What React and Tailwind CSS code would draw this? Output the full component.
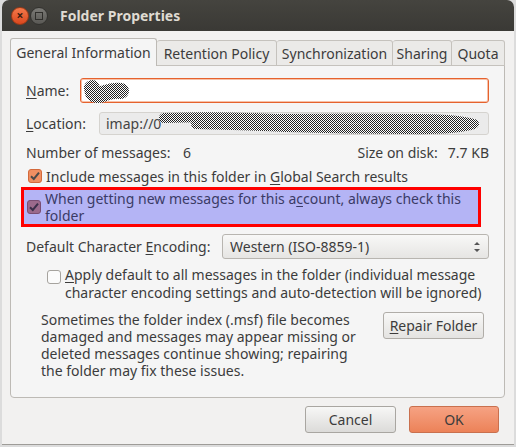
import React from 'react';

// dithered "scribble" used to hide private text
function Scribble({ width, height, d, strokeWidth }) {
  return (
    <svg width={width} height={height} className="absolute left-0 top-0">
      <defs>
        <pattern id={`dith-${width}`} width="2" height="2" patternUnits="userSpaceOnUse">
          <rect width="2" height="2" fill="#ffffff" />
          <rect width="1" height="1" fill="#222222" />
          <rect x="1" y="1" width="1" height="1" fill="#222222" />
        </pattern>
      </defs>
      <path d={d} fill="none" stroke={`url(#dith-${width})`} strokeWidth={strokeWidth} strokeLinecap="round" strokeLinejoin="round" />
    </svg>
  );
}

function Check({ checked, tone = 'orange' }) {
  if (!checked) {
    return (
      <svg width="14" height="14" className="shrink-0">
        <rect x="0.5" y="0.5" width="13" height="13" rx="2.5" fill="#fbfbfb" stroke="#a6a39e" />
      </svg>
    );
  }
  const fill = tone === 'orange' ? '#ef8f62' : '#9b6a8c';
  const stroke = tone === 'orange' ? '#d3693b' : '#7a4e73';
  const mark = tone === 'orange' ? '#4a4a4a' : '#3a2f4a';
  return (
    <svg width="14" height="14" className="shrink-0">
      <rect x="0.5" y="0.5" width="13" height="13" rx="2.5" fill={fill} stroke={stroke} />
      <path d="M3 7.2 L5.8 10 L11 3.6" fill="none" stroke={mark} strokeWidth="2" />
    </svg>
  );
}

const U = ({ children }) => <span className="underline underline-offset-2">{children}</span>;

export default function App() {
  const tabs = [
    ['Retention Policy', 'w-[120px]'],
    ['Synchronization', 'w-[116px]'],
    ['Sharing', 'w-[59px]'],
    ['Quota', 'w-[53px]'],
  ];

  return (
    <div className="w-[516px] h-[447px] bg-[#dcdcdc] overflow-hidden font-['Noto_Sans',sans-serif] text-[14px] text-[#3c3c3c]">
      <div className="ml-[2px] w-[512px] h-[445px] flex flex-col bg-[#f2f1f0] rounded-t-[7px] overflow-hidden border-b border-[#9e9c98]">
        {/* title bar */}
        <div className="h-[31px] shrink-0 flex items-center bg-gradient-to-b from-[#45443f] to-[#3a3935] px-[9px]">
          <div className="w-[18px] h-[18px] rounded-full bg-gradient-to-b from-[#f5794a] to-[#d9461c] border border-[#9c3a17] flex items-center justify-center text-[#3b1d10] text-[12px] leading-none font-bold">
            ×
          </div>
          <div className="ml-[1px] w-[18px] h-[18px] rounded-full bg-gradient-to-b from-[#7c7b77] to-[#595854] border border-[#33322f] flex items-center justify-center">
            <div className="w-[8px] h-[8px] border-[1.5px] border-[#2f2e2b]" />
          </div>
          <div className="ml-[12px] text-[14px] font-bold text-[#dfdbd2]">Folder Properties</div>
        </div>

        {/* tabs */}
        <div className="mt-[7px] ml-[8px] flex items-end h-[28px] relative z-10">
          <div className="h-[28px] w-[147px] flex items-center justify-center bg-[#f5f5f5] border border-b-0 border-[#bdbab5] rounded-t-[3px]">
            General Information
          </div>
          {tabs.map(([t, w]) => (
            <div key={t} className={`${w} h-[26px] flex items-center justify-center bg-[#ebeae8] border border-l-0 border-[#c5c2bd] rounded-t-[3px]`}>
              {t}
            </div>
          ))}
        </div>

        {/* panel */}
        <div className="-mt-[1px] ml-[8px] w-[495px] h-[333px] bg-[#f5f5f5] border border-[#bdbab5] rounded-b-[4px] px-[15px] pt-[12px] flex flex-col">
          {/* name */}
          <div className="flex items-center h-[25px]">
            <span className="w-[54px]"><U>N</U>ame:</span>
            <div className="relative flex-1 h-[25px] bg-white border border-[#e5622e] rounded-[3px] shadow-[0_0_0_1px_#f7c1a8_inset]">
              <div className="absolute left-[2px] top-[0px]">
                <Scribble width={50} height={24} strokeWidth={16} d="M9 9 L10 14 Q14 18 22 14 Q30 11 38 12" />
              </div>
            </div>
          </div>

          {/* location */}
          <div className="flex items-center h-[23px] mt-[9px]">
            <span className="w-[73px]"><U>L</U>ocation:</span>
            <div className="relative flex-1 h-[23px] bg-[#ebebeb] border border-[#d5d3cf] rounded-[3px] flex items-center px-[6px] text-[#444]">
              <span>imap://0</span>
              <div className="absolute left-[56px] -top-[3px]">
                <Scribble width={330} height={28} strokeWidth={10} d="M8 8 Q60 6 120 9 Q200 8 260 9 Q300 9 318 14 Q300 20 250 19 Q190 19 130 17 Q80 15 40 14" />
              </div>
            </div>
          </div>

          {/* counts */}
          <div className="flex items-center justify-between h-[18px] mt-[8px]">
            <span className="flex">
              <span className="w-[157px]">Number of messages:</span>
              <span>6</span>
            </span>
            <span>Size on disk:<span className="ml-[10px]">7.7 KB</span></span>
          </div>

          {/* include in global search */}
          <div className="flex items-center gap-[4px] mt-[6px] ml-[2px] h-[18px]">
            <Check checked />
            <span>Include messages in this folder in <U>G</U>lobal Search results</span>
          </div>

          {/* highlighted option */}
          <div className="-ml-[5px] mt-[2px] w-[460px] h-[40px] border-[3px] border-[#ff0000] bg-[#b4b4f5] flex items-center gap-[4px] pl-[3px] text-[#3b3b66] leading-[17px]">
            <Check checked tone="purple" />
            <span>
              When getting new messages for this a<U>c</U>count, always check this
              <br />
              folder
            </span>
          </div>

          {/* encoding */}
          <div className="flex items-center h-[25px] mt-[7px]">
            <span className="w-[196px]">Default Character <U>E</U>ncoding:</span>
            <div className="flex-1 h-[25px] bg-gradient-to-b from-[#f8f8f7] to-[#e6e5e3] border border-[#b8b5b0] rounded-[3px] flex items-center justify-between px-[7px]">
              <span>Western (ISO-8859-1)</span>
              <svg width="8" height="14" className="text-[#555]">
                <path d="M1 5 L4 2 L7 5 Z M1 9 L4 12 L7 9 Z" fill="currentColor" />
              </svg>
            </div>
          </div>

          {/* apply default */}
          <div className="flex items-start gap-[4px] mt-[7px] ml-[21px] leading-[18px]">
            <div className="mt-[4px]"><Check /></div>
            <span>
              <U>A</U>pply default to all messages in the folder (individual message
              <br />
              character encoding settings and auto-detection will be ignored)
            </span>
          </div>

          {/* repair */}
          <div className="flex items-start justify-between mt-[9px] ml-[15px]">
            <p className="leading-[17px]">
              Sometimes the folder index (.msf) file becomes
              <br />
              damaged and messages may appear missing or
              <br />
              deleted messages continue showing; repairing
              <br />
              the folder may fix these issues.
            </p>
            <button className="mt-[1px] mr-[5px] h-[27px] w-[101px] bg-gradient-to-b from-[#f8f8f7] to-[#e4e3e1] border border-[#b0ada8] rounded-[3px] text-[#3c3c3c]">
              <U>R</U>epair Folder
            </button>
          </div>
        </div>

        {/* dialog buttons */}
        <div className="flex justify-end gap-[13px] mt-[8px] mr-[15px]">
          <button className="w-[91px] h-[27px] bg-gradient-to-b from-[#f7f7f6] to-[#dcdbd9] border border-[#a9a6a1] rounded-[3px] text-[#3c3c3c]">
            Cancel
          </button>
          <button className="w-[90px] h-[27px] bg-gradient-to-b from-[#f6a283] to-[#ec8258] border border-[#c9704e] rounded-[3px] text-[#3c3c3c]">
            OK
          </button>
        </div>
      </div>
    </div>
  );
}
